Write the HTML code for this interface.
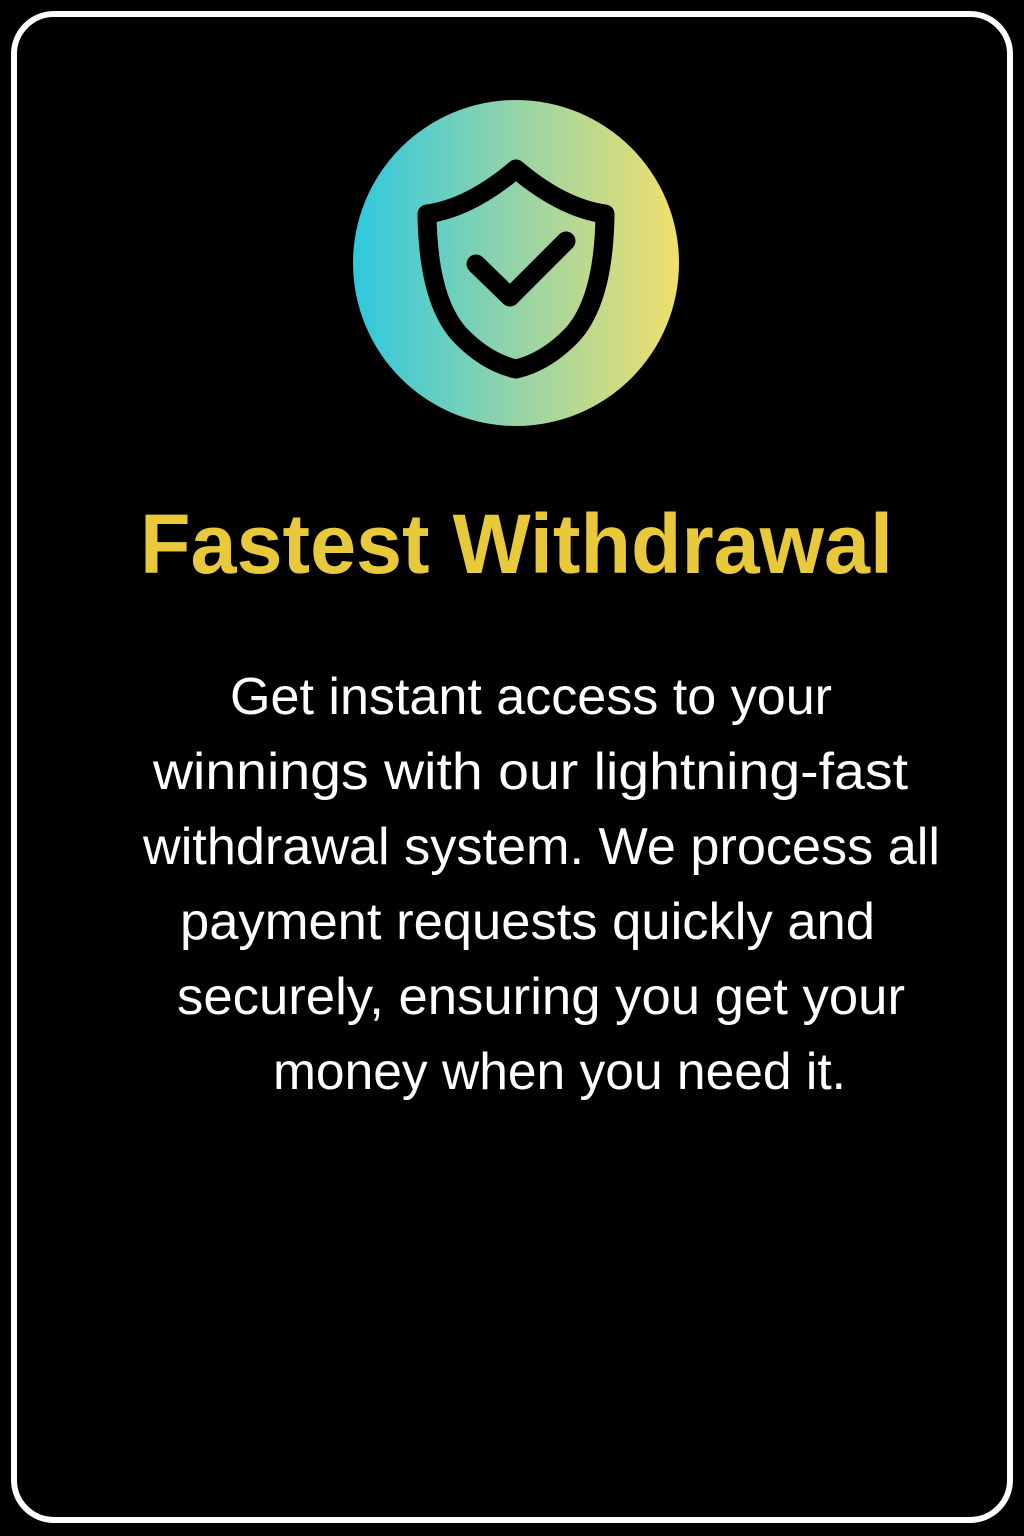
<!DOCTYPE html>
<html><head><style>
html,body{margin:0;padding:0;background:#000;width:1024px;height:1536px;overflow:hidden}
svg{display:block}
</style></head><body>
<svg width="1024" height="1536" viewBox="0 0 1024 1536" xmlns="http://www.w3.org/2000/svg">
<defs>
<linearGradient id="g" x1="0" y1="0" x2="1" y2="0">
<stop offset="0" stop-color="#2fc8df"/>
<stop offset="0.5" stop-color="#95d4a8"/>
<stop offset="1" stop-color="#f0df6c"/>
</linearGradient>
</defs>
<rect x="0" y="0" width="1024" height="1536" fill="#000"/>
<rect x="14" y="14" width="996" height="1506" rx="40" fill="none" stroke="#fff" stroke-width="6"/>
<circle cx="516" cy="263" r="163" fill="url(#g)"/>
<path d="M516 169 Q470 208 427 214 Q428 300 460 335 Q486 362 516 369 Q546 362 572 335 Q604 300 605 214 Q562 208 516 169 Z" fill="none" stroke="#000" stroke-width="19" stroke-linejoin="round"/>
<path d="M476 264 L510 297 L566 241" fill="none" stroke="#000" stroke-width="19" stroke-linecap="round" stroke-linejoin="round"/>
<text x="140" y="573" textLength="753" lengthAdjust="spacingAndGlyphs" font-family="Liberation Sans, sans-serif" font-weight="bold" font-size="84" fill="#e8c93c">Fastest Withdrawal</text>
<g font-family="Liberation Sans, sans-serif" font-size="52" fill="#fff">
<text x="230" y="714" textLength="602" lengthAdjust="spacingAndGlyphs">Get instant access to your</text>
<text x="153" y="789" textLength="755" lengthAdjust="spacingAndGlyphs">winnings with our lightning-fast</text>
<text x="143" y="864" textLength="797" lengthAdjust="spacingAndGlyphs">withdrawal system. We process all</text>
<text x="180" y="939" textLength="695" lengthAdjust="spacingAndGlyphs">payment requests quickly and</text>
<text x="177" y="1014" textLength="728" lengthAdjust="spacingAndGlyphs">securely, ensuring you get your</text>
<text x="273" y="1089" textLength="573" lengthAdjust="spacingAndGlyphs">money when you need it.</text>
</g>
</svg>
</body></html>
